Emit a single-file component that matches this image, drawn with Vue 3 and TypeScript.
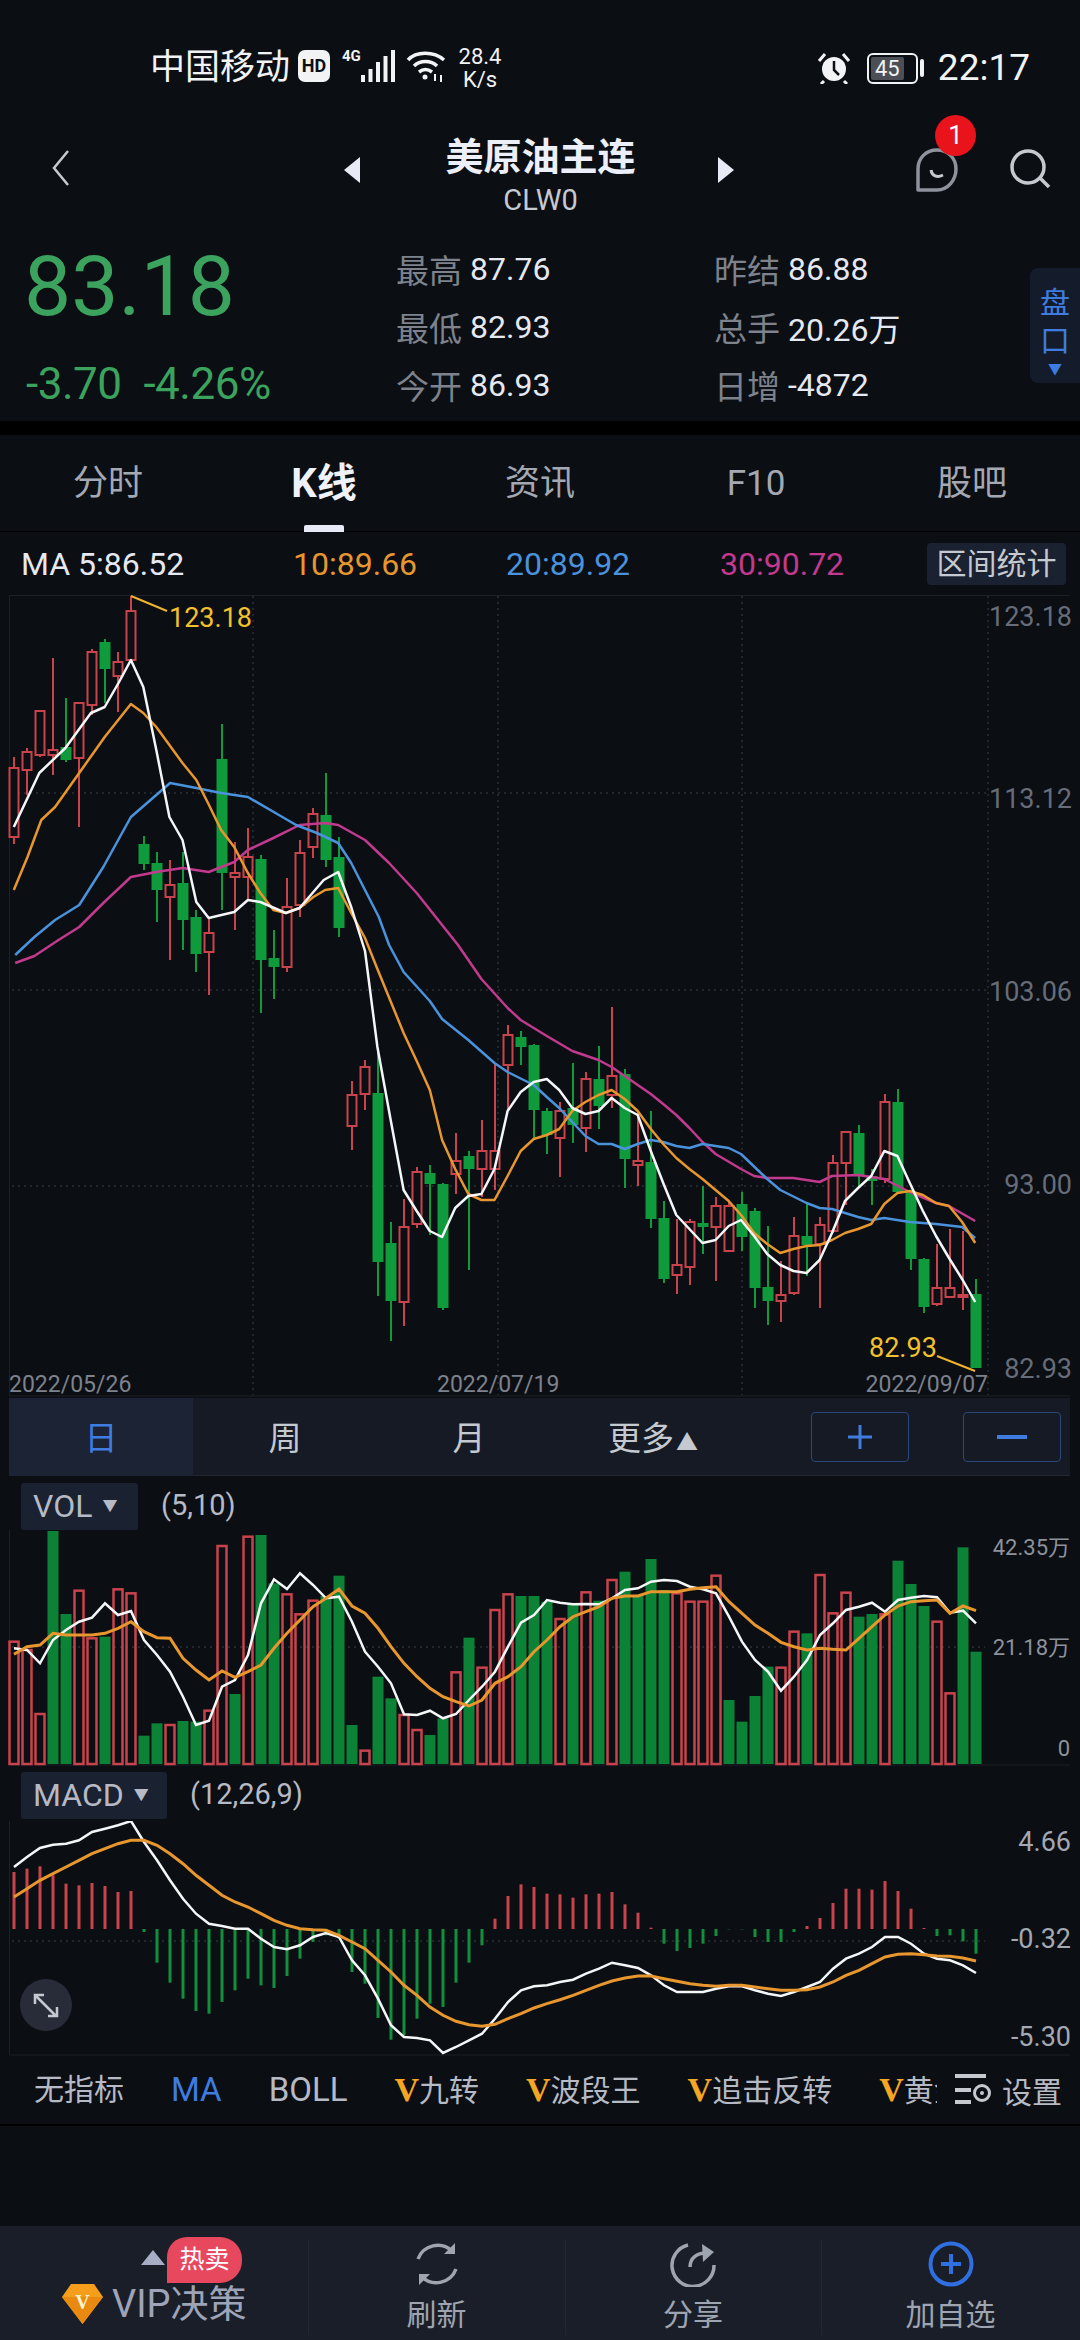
<script setup lang="ts">
type Candle = [number, number, number, number, number]
const X = (i: number) => 14 + 13 * i
const ZX = (z: number) => z / 1.452
const candles: Candle[] = [
  [1,757,768,837,844],[1,748,752,770,795],[1,710,711,755,757],[1,658,750,755,775],[0,698,747,760,762],
  [1,703,703,758,827],[1,649,652,705,715],[0,639,642,669,703],[1,652,662,676,712],[1,596,611,660,662],
  [0,836,844,864,870],[0,852,863,890,922],[1,860,885,897,960],[0,852,883,920,950],[0,910,917,954,972],
  [1,917,933,952,995],[0,724,759,873,910],[1,842,873,877,930],[1,828,857,877,900],[0,855,859,960,1013],
  [0,930,958,967,999],[1,878,907,967,972],[1,840,853,905,917],[1,808,814,847,858],[0,773,815,860,867],
  [0,837,857,928,937],[1,1081,1095,1126,1150],[1,1060,1067,1094,1110],[0,1051,1093,1262,1296],[0,1222,1243,1301,1341],
  [1,1199,1227,1302,1326],[1,1167,1172,1224,1228],[0,1165,1173,1184,1235],[0,1183,1184,1308,1310],[1,1133,1161,1174,1194],
  [0,1151,1156,1169,1270],[1,1120,1151,1169,1197],[1,1063,1151,1169,1190],[1,1025,1035,1065,1111],[0,1031,1037,1047,1065],
  [0,1044,1045,1110,1140],[0,1108,1111,1135,1154],[1,1102,1111,1138,1177],[0,1063,1108,1125,1143],[1,1072,1079,1128,1152],
  [0,1046,1079,1106,1129],[1,1007,1076,1095,1108],[0,1069,1074,1159,1188],[1,1111,1161,1165,1186],[0,1111,1162,1219,1228],
  [0,1201,1218,1279,1283],[1,1219,1265,1275,1294],[1,1219,1222,1267,1285],[0,1186,1223,1227,1254],[1,1197,1206,1227,1281],
  [1,1201,1206,1251,1252],[0,1192,1204,1237,1251],[0,1208,1211,1288,1308],[0,1226,1287,1301,1325],[1,1261,1295,1301,1322],
  [1,1217,1236,1293,1295],[0,1204,1236,1245,1276],[1,1217,1225,1244,1308],[1,1155,1163,1231,1233],[1,1131,1132,1163,1205],
  [0,1125,1133,1176,1186],[0,1169,1176,1181,1205],[1,1094,1102,1179,1183],[0,1089,1102,1192,1194],[0,1190,1192,1259,1270],
  [0,1258,1259,1307,1313],[1,1244,1288,1304,1306],[1,1229,1288,1297,1298],[1,1231,1295,1297,1310],[0,1279,1294,1368,1368],
]
const pts = (a: number[][]) => a.map(p => `${ZX(p[0]).toFixed(1)},${p[1]}`).join(' ')
const ma5 = pts([[20,827],[57,773],[95,748],[132,713],[152,707],[172,683],[190,660],[208,687],[227,750],[246,817],[265,840],[285,902],[303,918],[340,912],[360,900],[378,902],[415,913],[435,908],[470,880],[491,872],[510,907],[530,951],[548,1047],[567,1119],[586,1190],[605,1211],[624,1231],[642,1237],[661,1208],[680,1196],[699,1194],[718,1169],[737,1111],[756,1092],[775,1082],[794,1079],[812,1090],[831,1108],[850,1114],[869,1111],[888,1098],[907,1108],[926,1115],[945,1151],[963,1183],[982,1215],[1001,1229],[1020,1243],[1039,1240],[1058,1226],[1076,1220],[1095,1236],[1114,1254],[1133,1265],[1152,1271],[1171,1273],[1190,1260],[1208,1233],[1227,1201],[1246,1188],[1265,1176],[1284,1151],[1303,1156],[1321,1183],[1340,1211],[1359,1236],[1378,1258],[1397,1279],[1416,1302]])
const ma10 = pts([[20,890],[40,857],[60,820],[80,807],[115,773],[152,737],[190,704],[208,713],[227,727],[265,763],[285,780],[302,803],[321,830],[340,847],[360,873],[378,893],[397,910],[415,913],[435,908],[455,897],[472,890],[491,888],[510,913],[530,938],[548,969],[567,1001],[586,1033],[605,1061],[624,1090],[642,1140],[661,1169],[680,1194],[699,1200],[718,1200],[737,1176],[756,1151],[775,1139],[794,1135],[812,1129],[831,1111],[850,1102],[869,1095],[888,1090],[907,1099],[926,1111],[945,1129],[963,1144],[982,1158],[1001,1169],[1020,1179],[1039,1190],[1058,1201],[1076,1215],[1095,1233],[1114,1244],[1133,1253],[1152,1249],[1171,1246],[1190,1245],[1208,1240],[1227,1233],[1246,1229],[1265,1224],[1284,1204],[1303,1193],[1321,1191],[1340,1195],[1359,1203],[1378,1206],[1397,1222],[1416,1243]])
const ma20 = pts([[22,955],[50,937],[80,920],[115,905],[150,867],[190,817],[247,783],[285,788],[321,793],[360,797],[400,813],[430,825],[460,833],[491,843],[510,863],[530,890],[550,917],[565,945],[586,972],[624,1001],[642,1019],[680,1040],[718,1063],[737,1072],[775,1085],[794,1097],[812,1108],[831,1122],[850,1136],[869,1144],[888,1144],[907,1149],[926,1144],[945,1140],[963,1142],[982,1146],[1001,1148],[1020,1144],[1058,1148],[1076,1154],[1114,1179],[1133,1190],[1171,1203],[1190,1208],[1208,1209],[1246,1217],[1265,1220],[1284,1218],[1321,1222],[1359,1224],[1397,1227],[1416,1238]])
const ma30 = pts([[22,963],[50,956],[85,940],[115,927],[150,903],[190,877],[227,872],[265,868],[303,872],[340,862],[360,850],[397,838],[435,825],[472,823],[491,825],[530,840],[565,863],[605,893],[642,925],[665,945],[699,979],[737,1008],[756,1020],[794,1036],[831,1051],[869,1060],[888,1067],[907,1076],[945,1094],[963,1104],[982,1115],[1001,1128],[1020,1142],[1039,1154],[1076,1169],[1095,1176],[1114,1178],[1152,1178],[1190,1182],[1208,1176],[1246,1175],[1284,1179],[1321,1192],[1359,1203],[1378,1206],[1416,1221]])

const volY = (z: number) => 1470 + z / 3
const macdY = (z: number) => 1770 + z / 3
const series = (a: number[], f: (z: number) => number) => a.map((z, i) => `${X(i)},${f(z).toFixed(1)}`).join(' ')
const volRed = new Set([0,1,2,5,6,8,9,12,15,16,18,21,22,23,27,30,31,34,36,37,38,42,44,46,51,52,53,54,59,60,62,63,64,67,71,72])
const volTops = [515,540,732,183,432,362,505,500,358,370,797,760,765,753,755,722,228,672,200,195,340,373,433,392,378,317,765,842,620,685,735,780,795,745,607,503,593,420,373,378,378,395,447,405,367,392,330,305,375,267,360,370,395,395,317,690,755,678,590,593,485,490,315,430,368,440,432,433,272,342,408,455,670,232,545]
const volBars = volTops.map((t, i) => ({ x: X(i), y: volY(t), red: volRed.has(i) }))
const volWhite = series([535,540,580,510,480,455,443,400,435,423,510,555,605,680,765,752,650,630,555,400,328,357,310,345,385,380,455,545,590,640,733,735,722,745,732,690,650,605,530,458,435,390,398,403,402,403,385,360,355,335,330,333,350,358,370,440,515,570,605,662,620,570,495,460,420,410,398,425,390,383,378,382,428,422,460], volY)
const volOrange = series([553,530,525,490,495,495,495,490,475,455,485,503,505,565,600,630,603,622,605,585,535,490,450,410,385,357,408,430,475,530,580,620,655,680,695,708,690,640,620,590,545,510,470,440,425,410,385,378,378,365,365,365,358,353,350,395,430,465,490,517,530,540,535,538,540,505,470,435,408,395,392,390,430,408,422], volY)
const macdVals = [300,290,283,310,335,340,333,342,360,357,480,572,632,680,717,725,690,655,620,640,648,612,560,510,490,500,600,635,738,803,790,740,695,705,632,572,520,440,372,337,345,365,367,377,367,365,360,397,422,467,515,537,528,515,492,472,472,495,510,510,480,462,438,393,350,350,353,327,357,410,468,492,490,508,545]
const macdBars = macdVals.map((v, i) => ({ x: X(i), y: macdY(v), red: v < 472 }))
const macdWhite = series([285,255,228,218,215,205,180,170,160,147,210,265,325,380,425,455,462,470,470,500,525,532,520,495,483,495,565,610,680,760,795,798,805,843,825,805,785,740,690,655,643,640,630,623,605,590,572,580,588,610,640,660,660,660,650,643,643,655,665,672,660,645,630,590,560,545,525,495,495,515,545,560,565,580,603], macdY)
const macdOrange = series([375,350,325,305,285,265,245,230,215,205,205,220,245,275,310,340,370,390,405,425,445,460,470,473,475,490,510,530,565,600,640,670,705,730,748,758,763,757,740,725,708,695,683,670,655,640,627,618,612,612,620,628,635,640,643,640,640,645,650,655,655,653,645,630,610,595,575,555,547,545,548,552,553,558,567], macdY)

const tabs = ['分时', 'K线', '资讯', 'F10', '股吧']
const stats = [
  ['最高', '87.76'], ['最低', '82.93'], ['今开', '86.93'],
]
const stats2 = [
  ['昨结', '86.88'], ['总手', '20.26万'], ['日增', '-4872'],
]
const vItems = ['九转', '波段王', '追击反转']
</script>

<template>
  <div class="page">
    <div class="status">
      <span class="carrier">中国移动</span>
      <span class="hd">HD</span>
      <span class="net">4G</span>
      <svg class="signal" width="34" height="32" viewBox="0 0 34 32"><rect x="0" y="25" width="4" height="7" fill="#f2f3f5"/><rect x="7.500" y="19" width="4" height="13" fill="#f2f3f5"/><rect x="15" y="12" width="4" height="20" fill="#f2f3f5"/><rect x="22.500" y="6" width="4" height="26" fill="#f2f3f5"/><rect x="30" y="0" width="4" height="32" fill="#f2f3f5"/></svg>
      <svg class="wifi" width="40" height="32" viewBox="0 0 40 32" fill="none" stroke="#f2f3f5" stroke-width="3.500"><path d="M2 10 C10 1 28 1 38 10"/><path d="M8 16 C14 10 25 10 31 16"/><path d="M13 22 C17 19 22 19 26 22"/><circle cx="19" cy="27" r="2.500" fill="#f2f3f5" stroke="none"/><path d="M29 24v7M35 25v7" stroke-width="2"/></svg>
      <div class="speed"><span>28.4</span><span>K/s</span></div>
      <div class="status-right">
        <svg width="34" height="32" viewBox="0 0 34 32"><circle cx="17" cy="17" r="12" fill="#f2f3f5"/><path d="M17 9v9l5 5" stroke="#0b0e13" stroke-width="2.500" fill="none"/><path d="M2 9 L8 2M32 9 L26 2M7 29l-3 3M27 29l3 3" stroke="#f2f3f5" stroke-width="3"/></svg>
        <div class="battery"><span class="bat-num">45</span></div>
        <span class="nub"></span>
        <span class="time">22:17</span>
      </div>
    </div>

    <div class="nav">
      <svg class="back" width="18" height="36" viewBox="0 0 18 36" fill="none" stroke="#c5c9d0" stroke-width="2.500"><path d="M16 1 L2 18 L16 35"/></svg>
      <svg class="arrow" width="16" height="26" viewBox="0 0 16 26"><path d="M16 0V26L0 13Z" fill="#e8ebf5"/></svg>
      <div class="title"><b>美原油主连</b><span>CLW0</span></div>
      <svg class="arrow" width="16" height="26" viewBox="0 0 16 26"><path d="M0 0V26L16 13Z" fill="#e8ebf5"/></svg>
      <div class="chat">
        <svg width="42" height="44" viewBox="0 0 42 44" fill="none" stroke="#8d929c" stroke-width="3.500"><path d="M21 2 C10 2 2 10 2 21 V42 H21 C32 42 40 32 40 21 C40 10 32 2 21 2Z" stroke-linejoin="round"/><path d="M15 22 C16 28 21 30 27 27" stroke="#c5c9d0" stroke-width="3"/></svg>
        <span class="badge">1</span>
      </div>
      <svg class="search" width="42" height="40" viewBox="0 0 42 40" fill="none" stroke="#c5c9d0" stroke-width="3.500"><circle cx="19" cy="18" r="16"/><path d="M31 29 L40 38"/></svg>
    </div>

    <div class="quote">
      <div class="price">
        <div class="big">83.18</div>
        <div class="chg"><span>-3.70</span><span>-4.26%</span></div>
      </div>
      <div class="stat-col">
        <div v-for="s in stats" :key="s[0]" class="stat"><span class="k">{{ s[0] }}</span><span class="v">{{ s[1] }}</span></div>
      </div>
      <div class="stat-col second">
        <div v-for="s in stats2" :key="s[0]" class="stat"><span class="k">{{ s[0] }}</span><span class="v">{{ s[1] }}</span></div>
      </div>
      <div class="pankou"><span>盘</span><span>口</span><i>▼</i></div>
    </div>
    <div class="black"></div>

    <div class="tabs">
      <div v-for="(t, i) in tabs" :key="t" class="tab" :class="{ on: i === 1 }">{{ t }}</div>
    </div>

    <div class="marow">
      <span class="m0">MA 5:86.52</span>
      <span class="m1">10:89.66</span>
      <span class="m2">20:89.92</span>
      <span class="m3">30:90.72</span>
      <span class="range">区间统计</span>
    </div>

    <svg class="chart" width="1080" height="803" viewBox="0 595 1080 803">
      <g stroke="#2b3038" stroke-width="1.500" stroke-dasharray="2 4">
        <path d="M253 596V1395M498 596V1395M742 596V1395M988 596V1395"/>
        <path d="M12 793H988M12 990H988M12 1186H988"/>
      </g>
      <path d="M9.500 596V1396H1070M9 595.500H1070" stroke="#1c2027" stroke-width="1" fill="none"/>
      <g v-for="(c, i) in candles" :key="i">
        <template v-if="c[0]">
          <path :d="`M${X(i)} ${c[1]}V${c[2]}M${X(i)} ${c[3]}V${c[4]}`" stroke="#c9434c" stroke-width="2"/>
          <rect :x="X(i) - 4.500" :y="c[2]" width="9" :height="Math.max(c[3] - c[2], 2)" fill="#0b0e13" stroke="#c9434c" stroke-width="2"/>
        </template>
        <template v-else>
          <path :d="`M${X(i)} ${c[1]}V${c[4]}`" stroke="#0f9a3c" stroke-width="2"/>
          <rect :x="X(i) - 5.500" :y="c[2]" width="11" :height="c[3] - c[2]" fill="#0f9a3c"/>
        </template>
      </g>
      <g fill="none" stroke-width="2.500" stroke-linejoin="round">
        <polyline :points="ma30" stroke="#c23a8e"/>
        <polyline :points="ma20" stroke="#4a92dc"/>
        <polyline :points="ma10" stroke="#e8962e"/>
        <polyline :points="ma5" stroke="#f5f6f8"/>
      </g>
      <path d="M131 596L167 611M937 1356L975 1371" stroke="#f0b429" stroke-width="2" fill="none"/>
      <text class="yl" x="169" y="627">123.18</text>
      <text class="yl" x="869" y="1357">82.93</text>
      <g class="axis" text-anchor="end">
        <text x="1072" y="626">123.18</text>
        <text x="1072" y="808">113.12</text>
        <text x="1072" y="1001">103.06</text>
        <text x="1072" y="1194">93.00</text>
        <text x="1072" y="1378">82.93</text>
      </g>
      <g class="dates">
        <text x="9" y="1392">2022/05/26</text>
        <text x="437" y="1392">2022/07/19</text>
        <text x="988" y="1392" text-anchor="end">2022/09/07</text>
      </g>
    </svg>

    <div class="period">
      <span class="p on">日</span><span class="p">周</span><span class="p">月</span><span class="p more">更多<i>▲</i></span>
      <span class="pbtn first">
        <svg width="26" height="26" viewBox="0 0 26 26"><path d="M13 1V25M1 13H25" stroke="#3f7ce0" stroke-width="3"/></svg>
      </span>
      <span class="pbtn">
        <svg width="30" height="6" viewBox="0 0 30 6"><path d="M0 3H30" stroke="#3f7ce0" stroke-width="4"/></svg>
      </span>
    </div>

    <div class="sub-head vol-head"><span class="dd">VOL<i>▼</i></span><span class="param">(5,10)</span></div>
    <svg class="chart" width="1080" height="237" viewBox="0 1530 1080 237">
      <path d="M12 1647H985" stroke="#2b3038" stroke-width="1.500" stroke-dasharray="2 4"/>
      <path d="M9.500 1530V1765H1070" stroke="#1c2027" fill="none"/>
      <template v-for="(b, i) in volBars" :key="i">
        <rect v-if="b.red" :x="b.x - 4.500" :y="b.y" width="9" :height="1764 - b.y" fill="none" stroke="#c9434c" stroke-width="2.500"/>
        <rect v-else :x="b.x - 5.500" :y="b.y" width="11" :height="1764 - b.y" fill="#0c8237"/>
      </template>
      <polyline :points="volWhite" fill="none" stroke="#f5f6f8" stroke-width="2.500"/>
      <polyline :points="volOrange" fill="none" stroke="#e8962e" stroke-width="3"/>
      <g class="axis small" text-anchor="end">
        <text x="1070" y="1555">42.35万</text>
        <text x="1070" y="1655">21.18万</text>
        <text x="1070" y="1756">0</text>
      </g>
    </svg>

    <div class="sub-head macd-head"><span class="dd">MACD<i>▼</i></span><span class="param">(12,26,9)</span></div>
    <svg class="chart" width="1080" height="235" viewBox="0 1819 1080 235">
      <path d="M12 1939H985" stroke="#2b3038" stroke-width="1.500" stroke-dasharray="2 4"/>
      <path d="M9.500 1819V2053H1070" stroke="#1c2027" fill="none"/>
      <rect v-for="(b, i) in macdBars" :key="i" :x="b.x - 1.500" :y="Math.min(b.y, 1927)" width="3" :height="Math.abs(b.y - 1927)" :fill="b.red ? '#c9434c' : '#128f3c'"/>
      <polyline :points="macdWhite" fill="none" stroke="#f5f6f8" stroke-width="2.500"/>
      <polyline :points="macdOrange" fill="none" stroke="#e8962e" stroke-width="3"/>
      <ellipse cx="46" cy="2003" rx="26" ry="26" fill="#272c38"/>
      <path d="M36 1994L56 2014M35 2002V1993H44M57 2005V2014H48" fill="none" stroke="#c5c9d0" stroke-width="2.500"/>
      <g class="axis axis-light" text-anchor="end">
        <text x="1071" y="1849">4.66</text>
        <text x="1071" y="1946">-0.32</text>
        <text x="1071" y="2044">-5.30</text>
      </g>
    </svg>

    <div class="ind-row">
      <div class="ind-scroll">
        <span>无指标</span><span class="blue latin">MA</span><span class="latin">BOLL</span>
        <span v-for="v in vItems" :key="v"><b class="vv">V</b>{{ v }}</span>
        <span class="clip"><b class="vv">V</b>黄金</span>
      </div>
      <div class="setting">
        <svg width="37" height="32" viewBox="0 0 37 32"><path d="M0 2H31M0 16H16M0 28H16" stroke="#c5c9d0" stroke-width="4"/><circle cx="27" cy="19" r="7.500" fill="none" stroke="#c5c9d0" stroke-width="3"/><circle cx="27" cy="19" r="2" fill="#c5c9d0"/></svg>
        <span>设置</span>
      </div>
    </div>
    <div class="spacer"></div>

    <div class="bottom">
      <div class="cell vip">
        <div class="vip-top"><i class="up"></i><span class="hot">热卖</span></div>
        <div class="vip-main">
          <svg width="41" height="40" viewBox="0 0 41 40"><path d="M9 0H32L41 13 20.500 40 0 13Z" fill="#f59e1b"/><path d="M0 13H41L20.500 40Z" fill="#e88a10"/><text x="20.500" y="25" text-anchor="middle" class="gem">V</text></svg>
          <span>VIP决策</span>
        </div>
      </div>
      <div class="cell">
        <svg width="46" height="46" viewBox="0 0 46 46" fill="none" stroke="#9ea4b0" stroke-width="3.500"><path d="M38 10 A21 21 0 0 0 4 18"/><path d="M8 36 A21 21 0 0 0 42 28"/><path d="M41 2V13H30Z M5 44V33H16Z" fill="#9ea4b0" stroke="none"/></svg>
        <span>刷新</span>
      </div>
      <div class="cell">
        <svg width="46" height="46" viewBox="0 0 46 46" fill="none" stroke="#9ea4b0" stroke-width="3.500"><path d="M18 4 A21 21 0 1 0 44 24"/><path d="M20 26 C20 17 27 12 36 12" /><path d="M32 3L44 11 33 21Z" fill="#9ea4b0" stroke="none"/></svg>
        <span>分享</span>
      </div>
      <div class="cell">
        <svg width="46" height="46" viewBox="0 0 46 46" fill="none" stroke="#2f6fe0" stroke-width="4"><circle cx="23" cy="23" r="20.500"/><path d="M23 13V33M13 23H33"/></svg>
        <span>加自选</span>
      </div>
    </div>
  </div>
</template>

<style>
html, body { margin: 0; background: #0b0e13; }
</style>

<style scoped>
.page {
  width: 1080px;
  height: 2340px;
  overflow: hidden;
  background: #0b0e13;
  color: #eceef4;
  font-family: Roboto, "Noto Sans CJK SC", sans-serif;
  display: flex;
  flex-direction: column;
}
.status {
  height: 100px;
  box-sizing: border-box;
  padding: 45px 50px 0 150px;
  display: flex;
  align-items: flex-start;
  color: #f2f3f5;
}
.carrier { font-size: 35px; line-height: 42px; margin-top: 2px; width: 148px; white-space: nowrap; }
.hd { width: 32px; height: 32px; margin-top: 5px; background: #f2f3f5; color: #0b0e13; border-radius: 7px; font-size: 18px; font-weight: 700; line-height: 32px; text-align: center; }
.net { font-size: 15px; font-weight: 700; width: 19px; margin: 3px 0 0 12px; line-height: 16px; }
.signal { margin-top: 5px; }
.wifi { margin: 5px 0 0 11px; }
.speed { display: flex; flex-direction: column; align-items: center; font-size: 22px; line-height: 23px; margin-left: 11px; width: 46px; }
.status-right { margin-left: auto; display: flex; align-items: center; height: 40px; margin-top: 3px; }
.battery { width: 51px; height: 31px; margin-left: 16px; border: 2.500px solid #f2f3f5; border-radius: 6px; box-sizing: border-box; padding: 2px; display: flex; }
.bat-num { width: 33px; background: #4c4f55; border-radius: 2px; font-size: 22px; line-height: 24px; text-align: center; }
.nub { width: 4px; height: 18px; background: #f2f3f5; border-radius: 2px; margin: 0 14px 0 2px; }
.time { font-size: 37px; line-height: 40px; }

.nav { height: 125px; position: relative; display: flex; align-items: flex-start; padding-top: 50px; box-sizing: border-box; }
.back { margin-left: 52px; }
.arrow { margin-top: 7px; }
.nav > .arrow:nth-of-type(2) { margin-left: 274px; }
.title { width: 358px; display: flex; flex-direction: column; align-items: center; margin-top: -17px; padding-left: 3px; box-sizing: border-box; }
.title b { font-size: 38px; line-height: 48px; font-weight: 700; color: #eceef8; }
.title span { font-size: 29px; line-height: 34px; color: #c5c9d0; margin-top: 2px; }
.chat { position: relative; margin: -2px 0 0 182px; width: 42px; height: 44px; }
.badge { position: absolute; left: 19px; top: -33px; width: 41px; height: 41px; border-radius: 50%; background: #e8131b; color: #fff; font-size: 26px; line-height: 41px; text-align: center; }
.search { margin: -1px 0 0 51px; }

.quote { height: 196px; display: flex; position: relative; padding-left: 26px; box-sizing: border-box; }
.price { width: 370px; color: #3ba35e; }
.big { font-size: 84px; line-height: 90px; margin-top: 17px; margin-left: -2px; }
.chg { display: flex; gap: 22px; font-size: 44px; line-height: 48px; margin-top: 28px; letter-spacing: -0.5px; }
.stat-col { width: 318px; padding-top: 24px; display: flex; flex-direction: column; gap: 18px; }
.stat-col.second { width: 316px; }
.stat { display: flex; align-items: center; height: 40px; gap: 8px; font-size: 32px; }
.k { color: #7d828c; font-size: 33px; }
.v { color: #e6e9f2; }
.pankou { width: 50px; height: 115px; margin-top: 43px; background: #141c2c; border-radius: 8px 0 0 8px; color: #3f7ce0; font-size: 30px; line-height: 38px; display: flex; flex-direction: column; align-items: center; padding-top: 16px; box-sizing: border-box; }
.pankou i { font-style: normal; font-size: 14px; line-height: 18px; }
.black { height: 14px; background: #000; }

.tabs { height: 97px; display: grid; grid-template-columns: repeat(5, 1fr); box-sizing: border-box; border-bottom: 1px solid #000; }
.tab { text-align: center; color: #a3a8b2; font-size: 35px; line-height: 97px; position: relative; }
.tab.on { color: #f0f2fa; font-weight: 700; font-size: 40px; }
.tab.on::after { content: ""; position: absolute; left: 88px; bottom: 0; width: 40px; height: 7px; background: #e8eaf8; border-radius: 2px 2px 0 0; }

.marow { height: 63px; display: flex; align-items: center; font-size: 32px; padding-left: 21px; box-sizing: border-box; position: relative; }
.marow span { white-space: nowrap; }
.m0 { color: #e6e9f2; width: 272px; }
.m1 { color: #e8962e; width: 213px; }
.m2 { color: #4a92dc; width: 214px; }
.m3 { color: #c23a8e; width: 207px; }
.range { width: 139px; height: 42px; background: #1a2130; border-radius: 4px; color: #c5c9d0; text-align: center; line-height: 42px; font-size: 30px; }

.chart { display: block; flex: none; }
.yl { fill: #f2c12e; font-size: 27px; }
.axis { fill: #666c78; font-size: 27px; }
.axis.small { fill: #8d929c; font-size: 22px; }
.axis-light { fill: #a3a8b2; }
.dates { fill: #7d828c; font-size: 23px; }

.period { height: 78px; margin: 0 10px 0 9px; background: #151a25; display: flex; align-items: center; flex: none; border-bottom: 1px solid #22262f; box-sizing: border-box; }
.p { width: 184px; height: 78px; line-height: 82px; text-align: center; font-size: 33px; color: #c5c9d0; }
.p.on { background: #1b2334; color: #3f7ce0; }
.more i { font-style: normal; font-size: 22px; margin-left: 2px; }
.pbtn { width: 98px; height: 50px; border: 1.500px solid #2c4778; border-radius: 4px; box-sizing: border-box; display: flex; align-items: center; justify-content: center; margin-left: 54px; }
.pbtn.first { margin-left: 66px; }

.sub-head { display: flex; align-items: flex-start; padding-left: 21px; box-sizing: border-box; flex: none; }
.vol-head { height: 54px; padding-top: 7px; }
.macd-head { height: 52px; padding-top: 3px; margin-top: 2px; }
.dd { height: 47px; background: #1a2130; border-radius: 3px; color: #b6bac4; font-size: 32px; line-height: 47px; padding: 0 12px; box-sizing: border-box; display: flex; gap: 10px; }
.dd i { font-style: normal; font-size: 15px; }
.vol-head .dd { width: 117px; }
.macd-head .dd { width: 146px; }
.param { color: #b6bac4; font-size: 29px; line-height: 44px; margin-left: 23px; }

.ind-row { height: 70px; display: flex; align-items: center; font-size: 30px; color: #b6bac4; flex: none; border-bottom: 2px solid #000; box-sizing: border-box; }
.ind-scroll { width: 937px; height: 44px; flex: none; padding-left: 34px; box-sizing: border-box; overflow: hidden; white-space: nowrap; display: flex; align-items: center; gap: 47px; }
.ind-scroll span { line-height: 44px; }
.latin { font-size: 33px; }
.blue { color: #3f7ce0; }
.vv { color: #f5a623; font-family: "Liberation Serif", serif; font-size: 34px; font-weight: 700; }
.setting { display: flex; align-items: center; margin-left: 18px; gap: 10px; }
.spacer { flex: 1; }

.bottom { height: 114px; background: #1a1e28; display: grid; grid-template-columns: 308px 257px 256px 259px; flex: none; }
.cell { display: flex; flex-direction: column; align-items: center; color: #9ea4b0; font-size: 30px; padding-top: 15px; box-sizing: border-box; position: relative; }
.cell + .cell::before { content: ""; position: absolute; left: 0; top: 14px; bottom: 5px; width: 1px; background: #23272f; }
.cell > span { line-height: 40px; margin-top: 8px; }
.vip { padding: 11px 0 0 62px; align-items: flex-start; }
.vip-top { display: flex; align-items: flex-end; margin-left: 79px; height: 46px; }
.up { width: 0; height: 0; border-left: 12px solid transparent; border-right: 12px solid transparent; border-bottom: 15px solid #a6adc4; margin-bottom: 18px; margin-right: 2px; }
.hot { width: 75px; height: 46px; background: #e8485e; color: #fff; font-size: 25px; line-height: 46px; text-align: center; border-radius: 20px 22px 22px 0; }
.vip-main { display: flex; align-items: center; gap: 9px; font-size: 38px; color: #9ea4b8; margin-top: 1px; line-height: 40px; }
.gem { fill: #fff3d0; font-family: "Liberation Serif", serif; font-size: 20px; font-weight: 700; }
</style>
